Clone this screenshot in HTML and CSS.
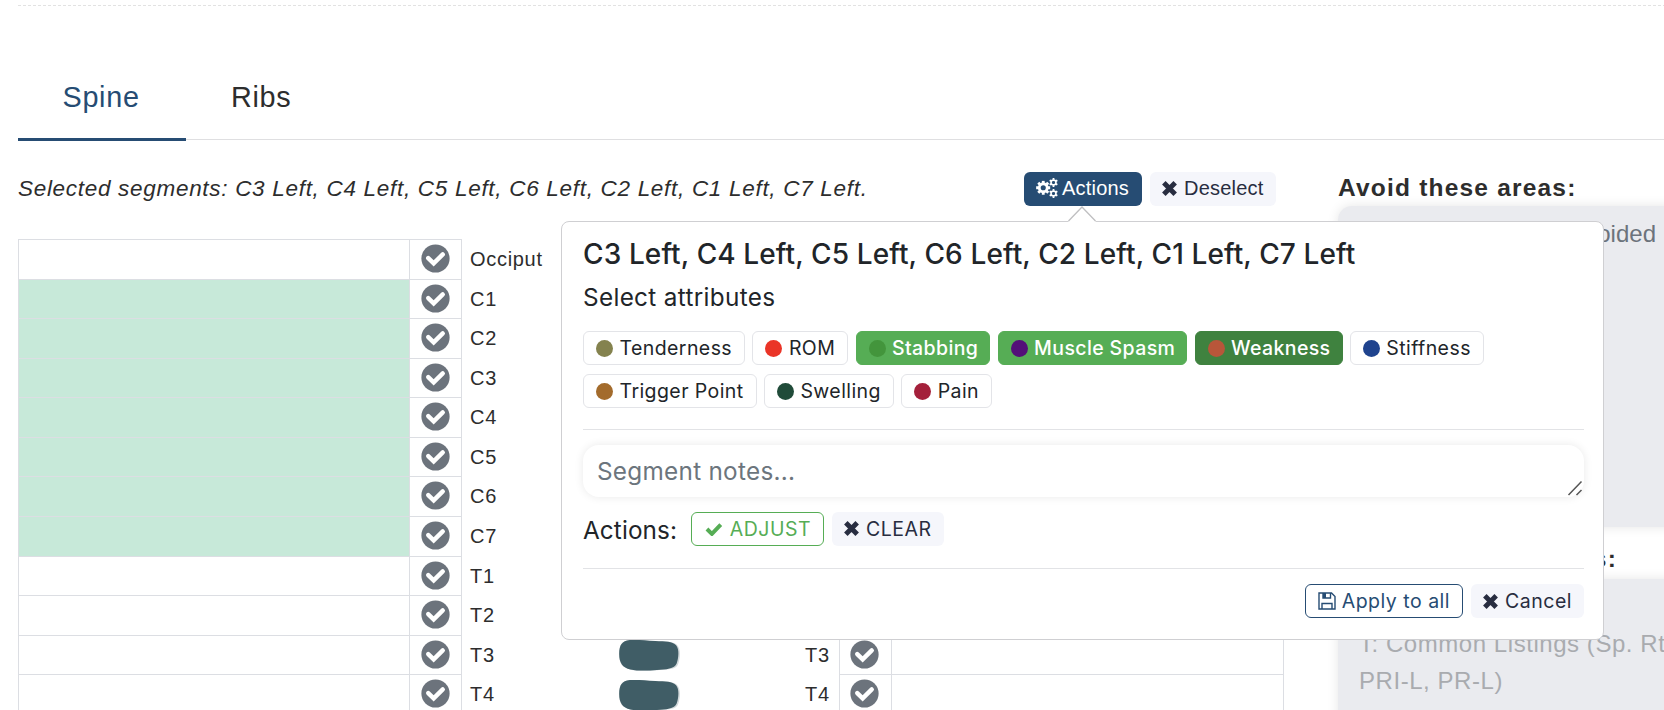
FILE: index.html
```
<!DOCTYPE html>
<html lang="en">
<head>
<meta charset="utf-8">
<title>Spine chart</title>
<link rel="stylesheet" href="styles.css">
</head>
<body>
<svg class="defs" aria-hidden="true">
  <symbol id="check-circle" viewBox="0 0 30 30">
    <circle cx="15" cy="15" r="14.6" fill="#6c737c"/>
    <path d="M7.500 14.600l5.600 5.400 9.400-9.200" fill="none" stroke="#fff" stroke-width="4.600" stroke-linecap="round" stroke-linejoin="miter"/>
  </symbol>
  <symbol id="times" viewBox="0 0 14 14">
    <path d="M1.700 1.700l10.600 10.600M12.300 1.700l-10.600 10.600" fill="none" stroke="currentColor" stroke-width="4.600"/>
  </symbol>
  <symbol id="cog" viewBox="-10 -10 20 20">
    <circle r="5.500" fill="none" stroke="currentColor" stroke-width="3.900"/>
    <path d="M0-9.800V-6M0 9.800V6M-9.800 0H-6M9.800 0H6M-6.900-6.900l2.500 2.500M6.900 6.900l-2.500-2.500M-6.900 6.900l2.500-2.500M6.900-6.900l-2.500 2.500" stroke="currentColor" stroke-width="3.900"/>
  </symbol>
  <symbol id="cog-small" viewBox="-10 -10 20 20">
    <circle r="5.400" fill="none" stroke="currentColor" stroke-width="3.600"/>
    <path d="M0-9.800V-6M0 9.800V6M-8.500-4.900l3.300 1.900M8.500 4.900l-3.300-1.900M-8.500 4.900l3.300-1.900M8.500-4.900l-3.300 1.900" stroke="currentColor" stroke-width="4"/>
  </symbol>
  <symbol id="vertebra" viewBox="0 0 64 34">
    <path d="M10 1C18 .2 28 2 38 2S58 2 61 7s2 12.500 0 18.500-12 5-21 6-20 1.500-28-.8S1.200 24 1.200 15 4 2 10 1z" fill="#d3d9db"/>
    <path d="M12 .8C20 .3 28 1.200 38 1.700S55.500 2 59 6s2.600 13 .6 18.500-11 6-20 6.700-19 1.200-27-.5S1.200 24 1.200 15 4 1.500 12 .8z" fill="#405d66"/>
  </symbol>
</svg>

<div class="page">
  <nav class="tabs">
    <a class="tab tab-active">Spine</a>
    <a class="tab">Ribs</a>
  </nav>

  <div class="columns">
    <main class="chart">
      <div class="toolbar">
        <em class="selected">Selected segments: C3 Left, C4 Left, C5 Left, C6 Left, C2 Left, C1 Left, C7 Left.</em>
        <div class="toolbar-buttons">
          <button class="btn btn-primary"><svg class="gears" viewBox="0 0 22 20"><use href="#cog" x="0" y="2.500" width="14.500" height="14.500"/><use href="#cog-small" x="13" y="0" width="9" height="9"/><use href="#cog-small" x="13" y="11" width="9" height="9"/></svg>Actions</button>
          <button class="btn btn-light"><svg class="x"><use href="#times"/></svg>Deselect</button>
        </div>
      </div>

      <div class="segments">
        <div class="side side-left">
          <div class="row"><span class="cell"></span><span class="tick"><svg><use href="#check-circle"/></svg></span><span class="name">Occiput</span></div>
          <div class="row"><span class="cell cell-on"></span><span class="tick"><svg><use href="#check-circle"/></svg></span><span class="name">C1</span></div>
          <div class="row"><span class="cell cell-on"></span><span class="tick"><svg><use href="#check-circle"/></svg></span><span class="name">C2</span></div>
          <div class="row"><span class="cell cell-on"></span><span class="tick"><svg><use href="#check-circle"/></svg></span><span class="name">C3</span></div>
          <div class="row"><span class="cell cell-on"></span><span class="tick"><svg><use href="#check-circle"/></svg></span><span class="name">C4</span></div>
          <div class="row"><span class="cell cell-on"></span><span class="tick"><svg><use href="#check-circle"/></svg></span><span class="name">C5</span></div>
          <div class="row"><span class="cell cell-on"></span><span class="tick"><svg><use href="#check-circle"/></svg></span><span class="name">C6</span></div>
          <div class="row"><span class="cell cell-on"></span><span class="tick"><svg><use href="#check-circle"/></svg></span><span class="name">C7</span></div>
          <div class="row"><span class="cell"></span><span class="tick"><svg><use href="#check-circle"/></svg></span><span class="name">T1</span></div>
          <div class="row"><span class="cell"></span><span class="tick"><svg><use href="#check-circle"/></svg></span><span class="name">T2</span></div>
          <div class="row"><span class="cell"></span><span class="tick"><svg><use href="#check-circle"/></svg></span><span class="name">T3</span></div>
          <div class="row"><span class="cell"></span><span class="tick"><svg><use href="#check-circle"/></svg></span><span class="name">T4</span></div>
        </div>
        <div class="spine">
          <svg><use href="#vertebra"/></svg>
          <svg><use href="#vertebra"/></svg>
        </div>
        <div class="side side-right">
          <div class="row"><span class="name">T3</span><span class="tick"><svg><use href="#check-circle"/></svg></span><span class="cell"></span></div>
          <div class="row"><span class="name">T4</span><span class="tick"><svg><use href="#check-circle"/></svg></span><span class="cell"></span></div>
        </div>
      </div>
    </main>

    <aside class="notes">
      <h3 class="notes-title">Avoid these areas:</h3>
      <div class="note note-avoid">Areas that should be avoided</div>
      <h3 class="notes-title notes-title-second">Adjusting listings:</h3>
      <div class="note note-listings">T: Common Listings (Sp. Rt<br>PRI-L, PR-L)</div>
    </aside>
  </div>
</div>

<section class="popover">
  <svg class="arrow" viewBox="0 0 28 16"><path d="M0 16L14 1l14 15z" fill="#fff"/><path d="M.5 15L14 1l13.500 14" fill="none" stroke="#bfbfc1" stroke-width="1.300"/></svg>
  <h2 class="popover-title">C3 Left, C4 Left, C5 Left, C6 Left, C2 Left, C1 Left, C7 Left</h2>
  <p class="popover-sub">Select attributes</p>
  <div class="chips">
    <span class="chip"><i class="dot olive"></i>Tenderness</span>
    <span class="chip"><i class="dot red"></i>ROM</span>
    <span class="chip chip-on"><i class="dot green"></i>Stabbing</span>
    <span class="chip chip-on"><i class="dot purple"></i>Muscle Spasm</span>
    <span class="chip chip-on chip-dark"><i class="dot rust"></i>Weakness</span>
    <span class="chip"><i class="dot blue"></i>Stiffness</span>
    <span class="chip"><i class="dot brown"></i>Trigger Point</span>
    <span class="chip"><i class="dot forest"></i>Swelling</span>
    <span class="chip"><i class="dot crimson"></i>Pain</span>
  </div>
  <div class="field">
    <span class="placeholder">Segment notes...</span>
    <svg class="grip" viewBox="0 0 16 16"><path d="M1.500 15L14.500 1.500M9.500 15l5-5" fill="none" stroke="#555" stroke-width="1.500"/></svg>
  </div>
  <div class="actions">
    <span class="actions-label">Actions:</span>
    <button class="btn btn-pop btn-success"><svg class="check" viewBox="0 0 18 14"><path d="M2 7l5 5 9-9.500" fill="none" stroke="currentColor" stroke-width="4"/></svg>ADJUST</button>
    <button class="btn btn-pop btn-light"><svg class="x"><use href="#times"/></svg>CLEAR</button>
  </div>
  <div class="footer">
    <button class="btn btn-pop btn-outline"><svg class="save" viewBox="0 0 18 18"><path d="M1 1h12.500L17 4.500V17H1zM4 17v-5.500h10V17M5 1v5h7.500V1" fill="none" stroke="currentColor" stroke-width="1.400"/><path d="M5 1h3v5H5z" fill="currentColor"/></svg>Apply to all</button>
    <button class="btn btn-pop btn-light"><svg class="x"><use href="#times"/></svg>Cancel</button>
  </div>
</section>
</body>
</html>
```

FILE: styles.css
```
* { box-sizing: border-box; }
body {
  margin: 0;
  width: 1664px;
  height: 710px;
  overflow: hidden;
  position: relative;
  background: #fff;
  color: #2d2d2d;
  font-family: "Liberation Sans", Arial, sans-serif;
}
h2, h3, p { margin: 0; }
.defs { position: absolute; width: 0; height: 0; }
.page { padding: 5px 0 0 18px; width: 1664px; }

/* Tabs */
.tabs {
  display: flex;
  height: 136px;
  padding-top: 56px;
  background:
    repeating-linear-gradient(90deg, #e2e2e2 0 3px, transparent 3px 5px) 0 0 / 100% 1px no-repeat,
    linear-gradient(#dfdfe1, #dfdfe1) 0 134px / 100% 1px no-repeat;
}
.tab {
  padding: 18px 44px 0 45px;
  height: 80px;
  font-size: 28.800px;
  line-height: 36px;
  letter-spacing: 0.700px;
}
.tab-active { width: 168px; padding-left: 44.500px; color: #264c73; border-bottom: 3px solid #264c73; }

/* Columns */
.columns { display: flex; gap: 54px; }
.chart { width: 1266px; flex: none; }
.toolbar { display: flex; justify-content: space-between; padding: 31px 8px 0 0; height: 98px; }
.selected { font-size: 22.500px; line-height: 34px; letter-spacing: 0.7px; white-space: nowrap; }
.toolbar-buttons { display: flex; gap: 8px; }
.btn {
  display: flex;
  align-items: center;
  height: 34px;
  padding: 0 12px;
  border: 0;
  border-radius: 6px;
  font: 20px/32px "Liberation Sans", Arial, sans-serif;
  letter-spacing: 0.2px;
  white-space: nowrap;
}
.toolbar .btn { padding-bottom: 2px; }
.btn-primary { width: 118px; background: #264c73; color: #fff; }
.btn-light { background: #f5f6fb; color: #282d40; }
.toolbar .btn-light { width: 126px; }
.gears { width: 22px; height: 20px; margin-right: 4px; flex: none; }
.x { width: 15px; height: 15px; margin-right: 7px; flex: none; }

/* Segment table */
.segments { display: flex; align-items: flex-start; height: 471px; }
.row { display: flex; height: 39.590px; }
.cell { width: 391px; border-left: 1px solid #dcdee3; border-top: 1px solid #dcdee3; }
.cell-on { background: #c7e9d9; }
.tick {
  width: 53px;
  display: flex;
  justify-content: center;
  padding-top: 4px;
  border: 1px solid #dcdee3;
  border-bottom: 0;
}
.tick svg { width: 29px; height: 29px; margin-left: -1px; }
.name { font-size: 20px; line-height: 40px; letter-spacing: 0.700px; padding-left: 8px; }
.side-left { width: 544px; }
.spine { width: 120px; padding: 400px 0 0 56px; display: flex; flex-direction: column; gap: 5.600px; }
.spine svg { width: 63px; height: 34px; flex: none; }
.side-right { width: 602px; padding-top: 395.600px; }
.side-right .name { width: 157px; padding: 0 9px 0 0; text-align: right; }
.side-right .cell { width: 393px; border-left: 0; border-right: 1px solid #dcdee3; }

/* Notes column */
.notes { width: 326px; flex: none; padding-top: 30px; }
.notes-title { font-size: 24.500px; line-height: 34px; letter-spacing: 1.200px; white-space: nowrap; }
.note {
  width: 360px;
  background: #eaebef;
  border-radius: 14px;
  box-shadow: 0 0 12px rgba(0, 0, 0, 0.1);
  font-size: 24px;
  white-space: nowrap;
}
.note-avoid { height: 321px; margin-top: 1px; padding: 11px 42px 0 0; line-height: 34px; color: #6c737c; text-align: right; }
.notes-title-second { width: 279px; margin: 15px 0 3px; text-align: right; }
.note-listings { height: 160px; padding: 46px 21px 0; line-height: 37px; letter-spacing: 0.550px; color: #a9abaf; }

/* Popover */
.popover {
  position: absolute;
  left: 561px;
  top: 221px;
  width: 1043px;
  height: 419px;
  padding: 14px 19px 0 21px;
  border: 1px solid #cfcfd2;
  border-radius: 8px;
  background: #fff;
  color: #212529;
  font-family: Inter, "Noto Sans", sans-serif;
}
.arrow { position: absolute; left: 506px; top: -16px; width: 28px; height: 16px; }
.popover-title { font-size: 28px; line-height: 36px; font-weight: 500; letter-spacing: 0.110px; white-space: nowrap; }
.popover-sub { font-size: 24.300px; line-height: 36px; margin-top: 7px; letter-spacing: 0.330px; }
.chips {
  display: flex;
  flex-wrap: wrap;
  gap: 9px 7.300px;
  height: 99px;
  margin: 16px 0 15px;
  align-content: flex-start;
  border-bottom: 1px solid #e2e3e6;
}
.chip {
  display: flex;
  align-items: center;
  height: 34px;
  padding: 0 12px 0 12px;
  border: 1px solid #e3e4e8;
  border-radius: 6px;
  font-size: 19.500px;
  letter-spacing: 0.420px;
}
.chip-on { padding: 0 11px 0 12px; background: #56ad55; border-color: #56ad55; color: #fff; font-weight: 500; letter-spacing: 0.380px; }
.chip-dark { background: #3f823f; border-color: #3f823f; }
.dot { width: 17px; height: 17px; border-radius: 50%; margin-right: 6.500px; }
.olive { background: #84824e; }
.red { background: #ea3427; }
.green { background: #43953c; }
.purple { background: #530f78; }
.rust { background: #b8563a; }
.blue { background: #1f438e; }
.brown { background: #a36b2c; }
.forest { background: #204b39; }
.crimson { background: #a4203b; }
.field {
  position: relative;
  height: 52px;
  border-radius: 16px;
  padding: 8px 14px;
  box-shadow: 0 0 10px rgba(0, 0, 0, 0.09);
  color: #6c757d;
  font-size: 24.300px;
  line-height: 37px;
  letter-spacing: 0.280px;
}
.grip { position: absolute; right: 1px; bottom: 1px; width: 16px; height: 16px; }
.actions { display: flex; align-items: center; height: 72px; padding-bottom: 8px; border-bottom: 1px solid #e2e3e6; }
.actions-label { font-size: 24.300px; letter-spacing: 0.100px; width: 108px; padding-top: 2px; }
.btn-pop { font-family: Inter, "Noto Sans", sans-serif; font-size: 19.500px; letter-spacing: 0.500px; }
.btn-success { width: 133px; border: 1px solid #56ad55; background: #fff; color: #56ad55; margin-right: 8px; padding-left: 13px; }
.btn-outline { border: 1px solid #264c73; background: #fff; color: #264c73; }
.check { width: 18px; height: 14px; margin-right: 7px; }
.save { width: 18px; height: 18px; margin-right: 6px; }
.footer { display: flex; justify-content: flex-end; gap: 8px; padding-top: 15px; }
```
